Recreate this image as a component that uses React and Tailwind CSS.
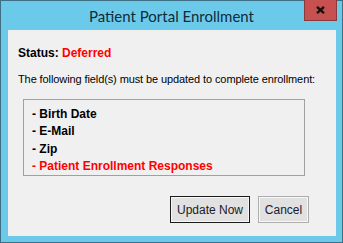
export default function App() {
  return (
    <div className="w-[343px] h-[243px] bg-[#6bcaea] border border-[#3f6f84] flex flex-col" style={{ fontFamily: "'Liberation Sans', Arial, sans-serif" }}>
      <div className="relative h-[29px] shrink-0 flex items-center justify-center">
        <span className="text-[15px] text-[#0f2a3a] pt-[2px]" style={{ fontFamily: "Lato, 'Liberation Sans', sans-serif" }}>
          Patient Portal Enrollment
        </span>
        <div className="absolute right-[5px] top-[-1px] w-[33px] h-[21px] bg-[#c75050] border border-[#8a3a3a] border-t-0 flex items-center justify-center">
          <svg width="9" height="8" viewBox="0 0 9 8" className="mt-[-1px]">
            <path d="M1 0.8 L8 7.2 M8 0.8 L1 7.2" stroke="#111" strokeWidth="2.3" />
          </svg>
        </div>
      </div>
      <div className="flex-1 ml-[7px] mr-[6px] mb-[6px] bg-[#f0f0f0] flex flex-col px-[10px]">
        <div className="mt-[16px] text-[12px] font-bold text-black leading-[14px]">
          Status: <span className="text-[#ff0000]">Deferred</span>
        </div>
        <div className="mt-[12px] text-[11px] text-black leading-[14px] tracking-[-0.1px]">
          The following field(s) must be updated to complete enrollment:
        </div>
        <div className="mt-[13px] ml-[5px] w-[282px] h-[77px] border border-[#a0a0a0] pl-[8px] pt-[6px] text-[12px] font-bold leading-[17.4px]">
          <div className="text-black">- Birth Date</div>
          <div className="text-black">- E-Mail</div>
          <div className="text-black">- Zip</div>
          <div className="text-[#ff0000]">- Patient Enrollment Responses</div>
        </div>
        <div className="mt-[20px] flex justify-end gap-[8px] pr-[17px]">
          <button className="w-[80px] h-[27px] border border-[#1a1a1a] bg-[#e1e1e1] text-[12px] text-[#1a1a2a] flex items-center justify-center" style={{ boxShadow: "inset 0 0 0 1px #f7f7f7" }}>
            Update Now
          </button>
          <button className="w-[51px] h-[27px] border border-[#adadad] bg-[#e1e1e1] text-[12px] text-[#1a1a2a] flex items-center justify-center" style={{ boxShadow: "inset 0 0 0 1px #f7f7f7" }}>
            Cancel
          </button>
        </div>
      </div>
    </div>
  );
}
